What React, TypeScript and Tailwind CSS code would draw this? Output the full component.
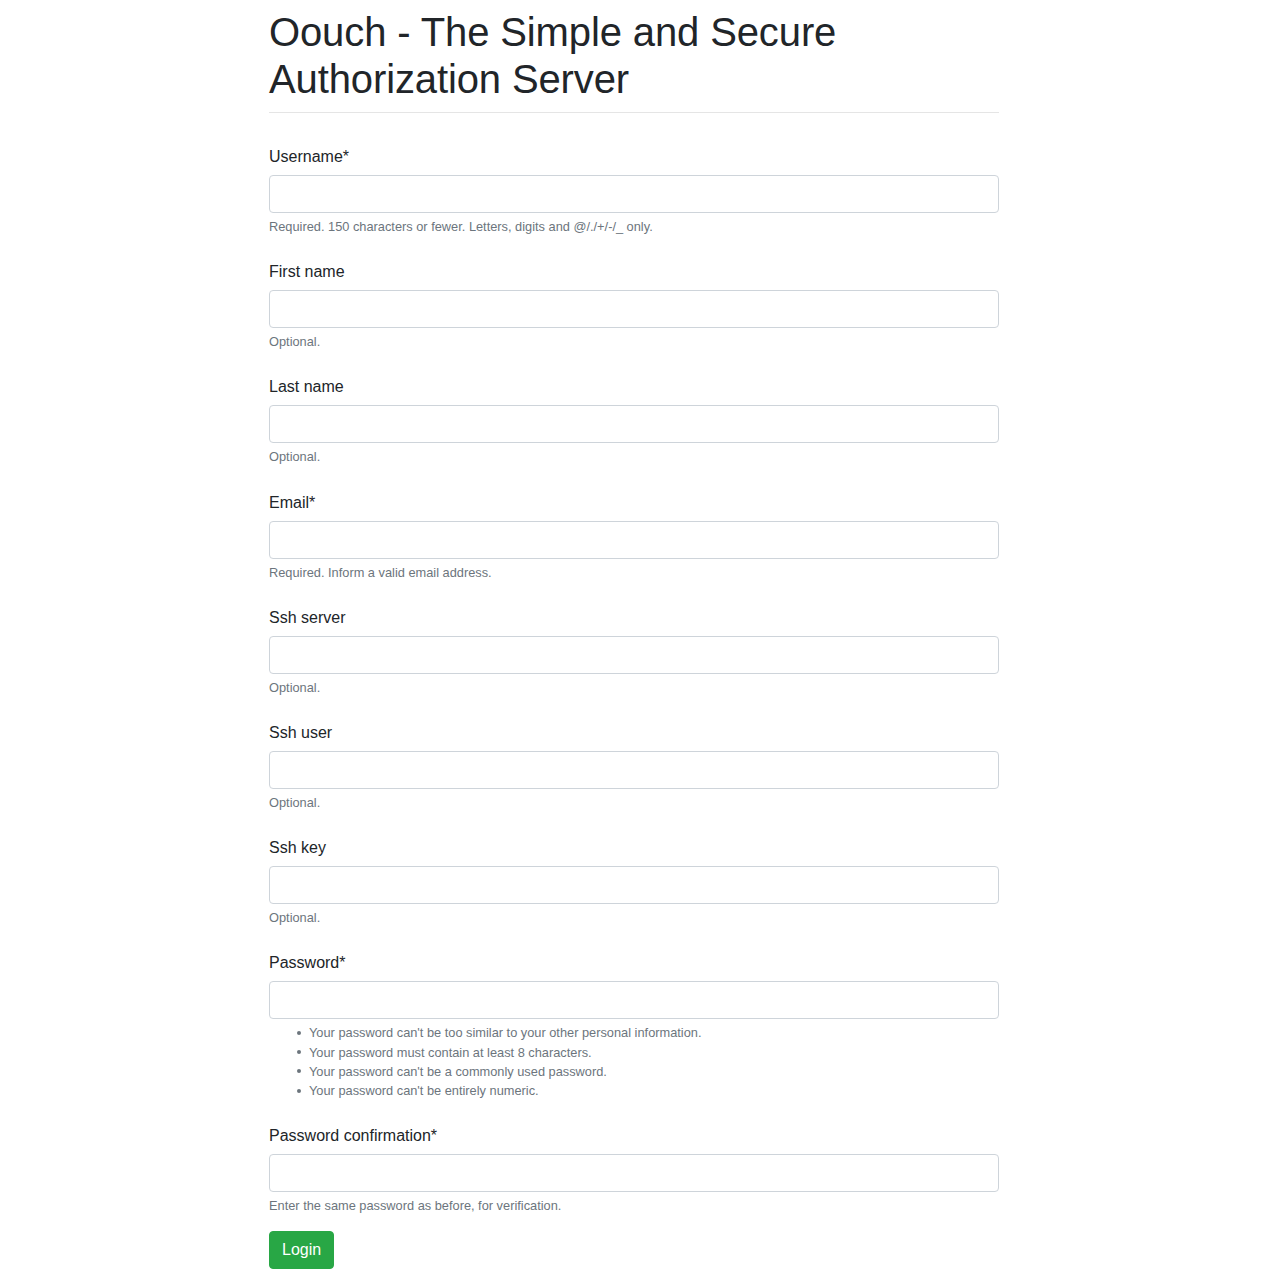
const fields = [
  { label: 'Username*', help: 'Required. 150 characters or fewer. Letters, digits and @/./+/-/_ only.' },
  { label: 'First name', help: 'Optional.' },
  { label: 'Last name', help: 'Optional.' },
  { label: 'Email*', help: 'Required. Inform a valid email address.' },
  { label: 'Ssh server', help: 'Optional.' },
  { label: 'Ssh user', help: 'Optional.' },
  { label: 'Ssh key', help: 'Optional.' },
];

const passwordRules = [
  "Your password can't be too similar to your other personal information.",
  'Your password must contain at least 8 characters.',
  "Your password can't be a commonly used password.",
  "Your password can't be entirely numeric.",
];

const inputClass =
  'block w-full h-[38px] rounded-[4px] border border-[#ced4da] bg-white px-3 outline-none';

const helpClass = 'mt-1 block text-[12.8px] leading-[19.2px] text-[#6c757d]';

const Label = ({ text }: { text: string }) => (
  <label className="mb-[6px] block h-6 leading-6">{text}</label>
);

export default function App() {
  return (
    <div className="min-h-[1269px] bg-white font-['Liberation_Sans',Arial,sans-serif] text-base text-[#212529]">
      <div className="mx-auto w-[730px] pt-[9px]">
        <h1 className="text-[40px] leading-[47px] font-normal tracking-[-0.12px]">
          Oouch - The Simple and Secure Authorization Server
        </h1>
        <hr className="mt-[9px] mb-[32px] border-t border-[#e5e5e5]" />
        <form>
          {fields.map((f) => (
            <div key={f.label} className="mb-6">
              <Label text={f.label} />
              <input type="text" className={inputClass} />
              <small className={helpClass}>{f.help}</small>
            </div>
          ))}
          <div className="mb-6">
            <Label text="Password*" />
            <input type="password" className={inputClass} />
            <ul className="mt-1 text-[12.8px] leading-[19.2px] text-[#6c757d]">
              {passwordRules.map((r) => (
                <li key={r} className="flex items-center">
                  <span className="ml-[28px] mr-2 h-1 w-1 shrink-0 rounded-full bg-[#6c757d]" />
                  {r}
                </li>
              ))}
            </ul>
          </div>
          <div className="mb-4">
            <Label text="Password confirmation*" />
            <input type="password" className={inputClass} />
            <small className={helpClass}>
              Enter the same password as before, for verification.
            </small>
          </div>
          <button
            type="submit"
            className="h-[38px] rounded-[4px] border border-[#28a745] bg-[#28a745] px-3 leading-6 text-white"
          >
            Login
          </button>
        </form>
      </div>
    </div>
  );
}
